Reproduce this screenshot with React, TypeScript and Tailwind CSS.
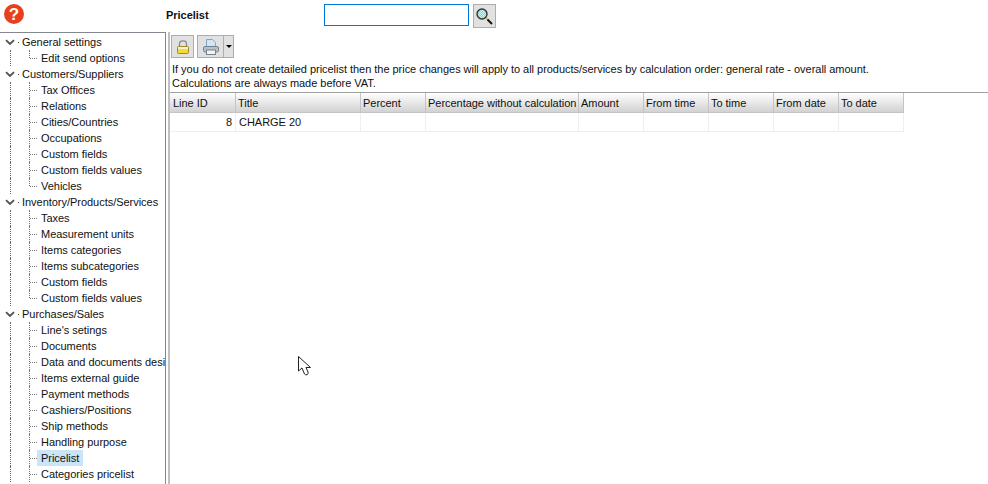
const treeData = [
  { title: "General settings", items: ["Edit send options"] },
  {
    title: "Customers/Suppliers",
    items: ["Tax Offices", "Relations", "Cities/Countries", "Occupations", "Custom fields", "Custom fields values", "Vehicles"],
  },
  {
    title: "Inventory/Products/Services",
    items: ["Taxes", "Measurement units", "Items categories", "Items subcategories", "Custom fields", "Custom fields values"],
  },
  {
    title: "Purchases/Sales",
    continues: true,
    items: [
      "Line's setings",
      "Documents",
      "Data and documents design",
      "Items external guide",
      "Payment methods",
      "Cashiers/Positions",
      "Ship methods",
      "Handling purpose",
      "Pricelist",
      "Categories pricelist",
    ],
  },
];

const columns = [
  { label: "Line ID", width: "w-[66px]", pad: "pl-[3px]" },
  { label: "Title", width: "w-[125px]", pad: "pl-[2px]" },
  { label: "Percent", width: "w-[65px]", pad: "pl-[2px]" },
  { label: "Percentage without calculation", width: "w-[153px]", pad: "pl-[2px]" },
  { label: "Amount", width: "w-[65px]", pad: "pl-[2px]" },
  { label: "From time", width: "w-[65px]", pad: "pl-[2px]" },
  { label: "To time", width: "w-[65px]", pad: "pl-[2px]" },
  { label: "From date", width: "w-[65px]", pad: "pl-[2px]" },
  { label: "To date", width: "w-[65px]", pad: "pl-[2px]" },
];

function Chevron() {
  return (
    <svg width="10" height="7" viewBox="0 0 10 7" className="ml-[5px] shrink-0">
      <path d="M1 1.2 L5 5 L9 1.2" fill="none" stroke="#505050" strokeWidth="1.8" />
    </svg>
  );
}

function TreeGroup({ title, items, continues }: { title: string; items: string[]; continues?: boolean }) {
  return (
    <div>
      <div className="flex h-4 items-center">
        <Chevron />
        <div className="ml-[3px] h-px w-px shrink-0 bg-[#555]" />
        <span className="ml-[3px] whitespace-nowrap">{title}</span>
      </div>
      {items.map((item, i) => {
        const last = i === items.length - 1 && !continues;
        return (
          <div key={item} className="flex h-4 items-center">
            <div className="ml-[10px] h-full w-px shrink-0 border-l border-dotted border-[#666]" />
            <div className="ml-[18px] flex h-full w-px shrink-0">
              <div className={`w-px border-l border-dotted border-[#777] ${last ? "h-2" : "h-full"}`} />
            </div>
            <div className="w-[7px] shrink-0 border-t border-dotted border-[#777]" />
            <span className={`whitespace-nowrap px-1 leading-4 ${item === "Pricelist" ? "bg-[#cce4f7]" : ""}`}>
              {item}
            </span>
          </div>
        );
      })}
    </div>
  );
}

function LockIcon() {
  return (
    <svg width="12" height="14" viewBox="0 0 12 14">
      <path d="M2.5 7 V3.5 C2.5 1.7 4 0.8 6 0.8 C8 0.8 9.5 1.7 9.5 3.5 V7" fill="none" stroke="#8a8a8a" strokeWidth="1.3" />
      <rect x="0.5" y="6.5" width="11" height="7" rx="1" fill="#f5dc28" stroke="#9c8a30" />
      <rect x="1" y="7" width="10" height="2" fill="#f4f0d8" />
    </svg>
  );
}

function PrinterIcon() {
  return (
    <svg width="16" height="16" viewBox="0 0 16 16">
      <path d="M3.5 8 V0.5 H9.5 L12.5 3.5 V8 Z" fill="#cde6f8" stroke="#7ba7cc" />
      <rect x="0.5" y="7.5" width="15" height="5.5" rx="1.5" fill="#b8c0c8" stroke="#78828c" />
      <rect x="3.5" y="11" width="9" height="4.5" fill="#f2f4f6" stroke="#78828c" />
    </svg>
  );
}

function SearchIcon() {
  return (
    <svg width="17" height="17" viewBox="0 0 17 17">
      <defs>
        <pattern id="glass" width="2" height="2" patternUnits="userSpaceOnUse">
          <rect width="2" height="2" fill="#7fdcd8" />
          <rect width="1" height="1" fill="#c8f0f0" />
          <rect x="1" y="1" width="1" height="1" fill="#c8f0f0" />
        </pattern>
      </defs>
      <path d="M10 10 L12 12" stroke="#d8c040" strokeWidth="2" />
      <path d="M11.5 11.5 L16 16" stroke="#111" strokeWidth="2" />
      <circle cx="6" cy="6" r="5" fill="url(#glass)" stroke="#333" strokeWidth="1.4" />
    </svg>
  );
}

function CursorIcon() {
  return (
    <svg width="14" height="20" viewBox="0 0 14 20" className="absolute left-[298px] top-[356px]">
      <path
        d="M0.5 0.5 V15 L4 12 L6.5 18 Q7.5 19.5 9.5 18.5 Q10.5 17.5 10 16 L8 11.5 H12.5 Z"
        fill="#fff"
        stroke="#222"
        strokeWidth="1"
      />
    </svg>
  );
}

export default function App() {
  return (
    <div className="relative flex h-[484px] w-[988px] flex-col overflow-hidden bg-white font-['Liberation_Sans',Arial,sans-serif] text-[11px] tracking-[-0.03px] text-[#111]">
      {/* top bar */}
      <div className="flex h-8 shrink-0 items-start">
        <div className="ml-1 mt-1 flex h-5 w-5 items-center justify-center rounded-full bg-[#e8401c] text-[17px] font-bold leading-none text-white">
          ?
        </div>
        <div className="ml-[142px] mt-[9px] font-bold leading-[13px]">Pricelist</div>
        <input className="ml-[115px] mt-1 h-[22px] w-[145px] border border-[#0078d7] bg-white outline-none" />
        <button className="ml-1 mt-1 flex h-6 w-[23px] items-center justify-center border border-[#adadad] bg-[#e1e1e1]">
          <SearchIcon />
        </button>
      </div>

      <div className="flex min-h-0 flex-1">
        {/* tree */}
        <div className="h-full w-[166px] shrink-0 overflow-hidden border-r border-t border-[#828790] pt-[1px]">
          <div className="flex flex-col">
            {treeData.map((group) => (
              <TreeGroup key={group.title} title={group.title} items={group.items} continues={group.continues} />
            ))}
          </div>
        </div>

        <div className="ml-[2px] w-[2px] shrink-0 bg-[#c0c0c0]" />

        {/* content */}
        <div className="flex min-w-0 flex-1 flex-col">
          <div className="flex h-[23px] items-start pl-[1px] pt-[3px] box-content">
            <button className="flex h-[23px] w-[23px] items-center justify-center border border-[#adadad] bg-[#e1e1e1]">
              <LockIcon />
            </button>
            <button className="ml-[3px] flex h-[23px] w-[27px] items-center justify-center border border-[#adadad] bg-[#e1e1e1]">
              <PrinterIcon />
            </button>
            <button className="ml-[-1px] flex h-[23px] w-[11px] items-center justify-center border border-[#adadad] bg-[#e1e1e1]">
              <span className="h-0 w-0 border-x-[3px] border-t-[3px] border-x-transparent border-t-black" />
            </button>
          </div>

          <div className="mt-[4px] pl-[2px] leading-[14px]">
            <p>If you do not create detailed pricelist then the price changes will apply to all products/services by calculation order: general rate - overall amount.</p>
            <p>Calculations are always made before VAT.</p>
          </div>

          <div className="mt-[2px] border-t border-[#a0a0a0]">
            <div className="flex h-5">
              {columns.map((col) => (
                <div
                  key={col.label}
                  className={`${col.width} ${col.pad} flex shrink-0 items-center whitespace-nowrap border-b border-r border-[#c4c4c4] bg-gradient-to-b from-white to-[#d2d2d2] pt-[1px]`}
                >
                  {col.label}
                </div>
              ))}
            </div>
            <div className="flex h-[19px]">
              {columns.map((col, i) => (
                <div
                  key={col.label}
                  className={`${col.width} flex shrink-0 items-center border-b border-r border-[#efefef] px-[3px] pt-[1px] ${i === 0 ? "justify-end" : ""}`}
                >
                  {i === 0 ? "8" : i === 1 ? "CHARGE 20" : ""}
                </div>
              ))}
            </div>
          </div>
        </div>
      </div>

      <CursorIcon />
    </div>
  );
}
